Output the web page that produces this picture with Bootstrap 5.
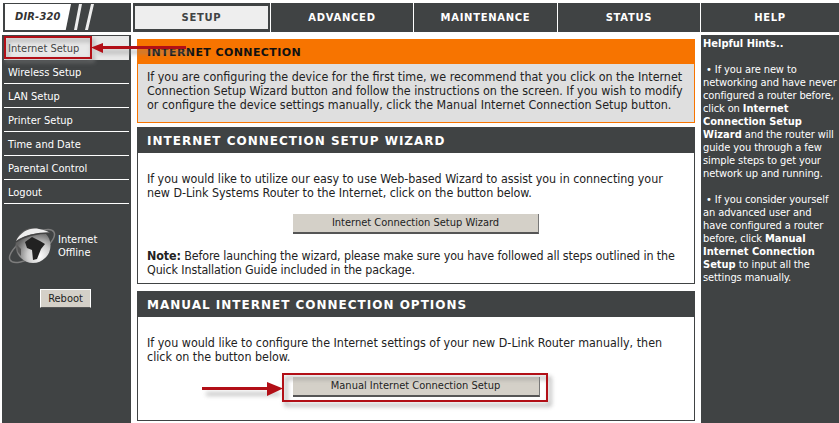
<!DOCTYPE html>
<html lang="en">
<head>
    <meta charset="UTF-8">
    <title>D-Link DIR-320</title>
    <link href="https://cdn.jsdelivr.net/npm/bootstrap@5.3.0/dist/css/bootstrap.min.css" rel="stylesheet">
    <style>
        html, body { height: 100%; }
        body {
            width: 839px;
            height: 423px;
            overflow: hidden;
            background: #fff;
            color: #222;
            font: 12.4px/14px "DejaVu Sans Condensed", "DejaVu Sans", sans-serif;
        }
        #frame { position: relative; width: 839px; height: 423px; padding: 3px 0 0 3px; }
        .top-row { height: 29px; gap: 1px; }
        .logo-cell { width: 128px; flex: none; background: #404344; padding: 1px 2px 2px; margin-right: 1px; }
        .logo-box {
            width: 66px; height: 26px; background: #fff; color: #333;
            font: italic bold 11px/26px "DejaVu Sans Condensed", sans-serif;
            letter-spacing: .2px;
            padding-left: 10px;
            clip-path: polygon(0 0, 100% 0, 92% 100%, 0 100%);
        }
        .tab-bar { background: #404344; height: 29px; width: 429px; flex: none; }
        .tab-item {
            color: #fff; font: bold 10px/30px "DejaVu Sans", sans-serif; letter-spacing: .7px;
            text-align: center; text-transform: uppercase; flex: none;
        }
        .tab-setup { width: 137px; background: #eee; color: #404344; border: solid #404344; border-width: 3px 2px; line-height: 24px; }
        .tab-advanced { width: 142px; }
        .tab-maint { width: 144px; border-left: 1px solid #fff; }
        .tab-status { width: 143px; border-left: 1px solid #fff; }
        .tab-help { width: 138px; background: #404344; }
        .body-row { height: 391px; margin-top: 3px; margin-left: -1px; }
        .side-col { width: 129px; background: #404344; padding: 1px 2px 0 2px; flex: none; font-size: 11px; }
        .side-menu a {
            display: block; height: 24px; padding-left: 4px; color: #fff;
            line-height: 25px; text-decoration: none; border-bottom: 1px solid #fff;
        }
        .side-menu a.on-page { background: #e8e8e8; color: #444; border-bottom-color: #e8e8e8; }
        .net-state { color: #fff; margin-top: 21px; padding-left: 3px; gap: 1px; line-height: 13px; }
        .btn-router {
            background: #d4d0c8; color: #222; border: 0; border-radius: 0;
            border-bottom: 2px solid #555; border-right: 1px solid #777; padding: 0;
            font: 11px/14px "DejaVu Sans Condensed", "DejaVu Sans", sans-serif;
        }
        .btn-reboot { width: 51px; height: 19px; border: 1px solid #fff; border-bottom: 1px solid #555; }
        .main-col { width: 558px; flex: none; margin-left: 6px; padding-top: 4px; }
        .panel-orange { height: 84px; border: 1px solid #f77400; background: #dfdfdf; border-top: 0; }
        .panel-orange .panel-head { background: #f77400; color: #111; font-size: 11px; letter-spacing: .4px; }
        .panel-dark { border: 1px solid #404344; background: #fff; }
        .panel-head {
            height: 25px; padding-left: 9px; background: #404344; color: #fff;
            font: bold 12px/27px "DejaVu Sans", sans-serif; letter-spacing: 1px; text-transform: uppercase;
        }
        .panel-body-text { padding: 6px 9px 0; }
        .wizard-text { letter-spacing: -.05px; }
        .note-text { padding: 15px 5px 0 9px; letter-spacing: -.12px; }
        .wizard-panel { height: 157px; margin-top: 4px; }
        .manual-panel { height: 130px; margin-top: 7px; }
        .help-col { flex-grow: 1; margin-left: 6px; background: #404344; color: #fff; padding: 2px 1.5px 0 2px; font-size: 11px; line-height: 13px; letter-spacing: -.1px; }
        .help-col b { letter-spacing: 0; }
        .overlay { position: absolute; left: 0; top: 0; pointer-events: none; }
    </style>
</head>
<body>
<div id="frame">
    <div class="d-flex top-row">
        <div class="logo-cell d-flex align-items-center">
            <div class="logo-box">DIR-320</div>
            <svg width="26" height="26" viewBox="0 0 26 26"><path d="M3 26 8 0h3L6 26zM14 26 20 0h3L17 26z" fill="#eee"/></svg>
        </div>
        <div class="tab-item tab-setup">Setup</div>
        <div class="tab-bar d-flex">
            <div class="tab-item tab-advanced">Advanced</div>
            <div class="tab-item tab-maint">Maintenance</div>
            <div class="tab-item tab-status">Status</div>
        </div>
        <div class="tab-item tab-help">Help</div>
    </div>
    <div class="d-flex body-row">
        <div class="side-col">
            <nav class="side-menu">
                <a class="on-page" href="#">Internet Setup</a>
                <a href="#">Wireless Setup</a>
                <a href="#">LAN Setup</a>
                <a href="#">Printer Setup</a>
                <a href="#">Time and Date</a>
                <a href="#">Parental Control</a>
                <a href="#">Logout</a>
            </nav>
            <div class="net-state d-flex align-items-center">
                <svg width="50" height="42" viewBox="0 0 50 42">
                    <defs>
                        <radialGradient id="ball" cx="68%" cy="80%" r="85%"><stop offset="0" stop-color="#fff"/><stop offset=".4" stop-color="#ccc"/><stop offset=".8" stop-color="#666"/><stop offset="1" stop-color="#555"/></radialGradient>
                    </defs>
                    <ellipse cx="25" cy="21" rx="26" ry="10" transform="rotate(-33 25 21)" fill="none" stroke="#7d7d7d" stroke-width="1.500"/>
                    <circle cx="26" cy="20.500" r="17.500" fill="url(#ball)"/>
                    <path d="M9 16C14 6 24 2 32 4 37 5 41 6 43 8 32 7 17 10 9 16z" fill="#eee"/>
                    <path d="M9 17C17 11 31 8 44 8" fill="none" stroke="#444" stroke-width="1.500"/>
                    <path d="M18 17 25 12 33 16 38 19 34 24 30 34 26 35 25 25 20 23z" fill="#222"/>
                    <path d="M10 20 14 24 14 31 11 27z" fill="#555"/>
                </svg>
                <div>Internet<br>Offline</div>
            </div>
            <div class="text-center" style="margin-top:22px;padding-right:2px">
                <button class="btn-router btn-reboot" type="button">Reboot</button>
            </div>
        </div>
        <div class="main-col">
            <div class="panel-orange">
                <div class="panel-head">Internet Connection</div>
                <div class="panel-body-text">If you are configuring the device for the first time, we recommend that you click on the Internet Connection Setup Wizard button and follow the instructions on the screen. If you wish to modify or configure the device settings manually, click the Manual Internet Connection Setup button.</div>
            </div>
            <div class="panel-dark wizard-panel">
                <div class="panel-head">Internet Connection Setup Wizard</div>
                <div class="panel-body-text wizard-text" style="padding-top:19px">If you would like to utilize our easy to use Web-based Wizard to assist you in connecting your new D-Link Systems Router to the Internet, click on the button below.</div>
                <div class="text-center" style="margin-top:14px">
                    <button class="btn-router" type="button" style="width:246px;height:20px">Internet Connection Setup Wizard</button>
                </div>
                <div class="note-text"><b>Note:</b> Before launching the wizard, please make sure you have followed all steps outlined in the Quick Installation Guide included in the package.</div>
            </div>
            <div class="panel-dark manual-panel">
                <div class="panel-head">Manual Internet Connection Options</div>
                <div class="panel-body-text" style="padding-top:19px">If you would like to configure the Internet settings of your new D-Link Router manually, then click on the button below.</div>
                <div class="text-center" style="margin-top:13px">
                    <button class="btn-router" type="button" style="width:247px;height:20px">Manual Internet Connection Setup</button>
                </div>
            </div>
        </div>
        <div class="help-col">
            <b>Helpful Hints..</b><br><br>
            &nbsp;&bull; If you are new to networking and have never configured a router before, click on <b>Internet Connection Setup Wizard</b> and the router will guide you through a few simple steps to get your network up and running.<br><br>
            &nbsp;&bull; If you consider yourself an advanced user and have configured a router before, click <b>Manual Internet Connection Setup</b> to input all the settings manually.
        </div>
    </div>
    <svg class="overlay" width="839" height="423" viewBox="0 0 839 423">
        <defs><filter id="soft" x="-20%" y="-50%" width="140%" height="200%"><feGaussianBlur stdDeviation="2"/></filter></defs>
        <g fill="none" stroke="#888" stroke-width="3" opacity=".6" filter="url(#soft)">
            <rect x="7" y="40" width="86" height="21"/>
            <path d="M98 52H190"/>
            <rect x="286" y="378" width="264" height="27"/>
            <path d="M206 394H280"/>
        </g>
        <g fill="none" stroke="#b20f17" stroke-width="2">
            <rect x="5" y="37" width="86" height="21"/>
            <rect x="283" y="374" width="264" height="27"/>
        </g>
        <path d="M186 46V49H103V53L91 47.500 103 43V46z" fill="#b20f17"/>
        <path d="M202 387H267V382L283 388.500 267 396V390H202z" fill="#b20f17"/>
    </svg>
</div>
<script src="https://cdn.jsdelivr.net/npm/bootstrap@5.3.0/dist/js/bootstrap.bundle.min.js"></script>
</body>
</html>
